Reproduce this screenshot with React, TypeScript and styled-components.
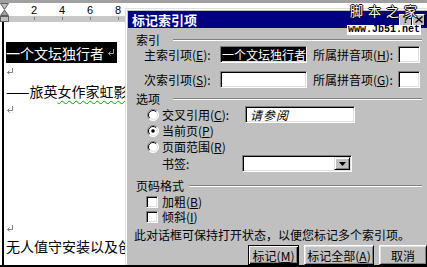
import styled, { createGlobalStyle } from "styled-components";

const cjk = `"Noto Sans CJK SC", "Noto Sans", sans-serif`;

const GlobalStyle = createGlobalStyle`
  html, body { margin: 0; padding: 0; background: #fff; }
  body { font-family: ${cjk}; }
  * { box-sizing: border-box; }
`;

function ReturnMark({ color = "#808080" }: { color?: string }) {
  return (
    <svg width="8" height="7" viewBox="0 0 8 7">
      <path d="M6.5 0 V4.5 H1.5" stroke={color} fill="none" />
      <path d="M3.5 2.5 L1.5 4.5 L3.5 6.5" stroke={color} fill="none" />
    </svg>
  );
}

function RadioIcon({ checked }: { checked?: boolean }) {
  return (
    <svg width="12" height="12" viewBox="0 0 12 12">
      <circle cx="6" cy="6" r="5.5" fill="#fff" />
      <path d="M2.1 9.9 A5.5 5.5 0 0 1 9.9 2.1" stroke="#808080" fill="none" />
      <path d="M2.8 9.2 A4.5 4.5 0 0 1 9.2 2.8" stroke="#000" fill="none" />
      <path d="M9.9 2.1 A5.5 5.5 0 0 1 2.1 9.9" stroke="#fff" fill="none" />
      <path d="M9.2 2.8 A4.5 4.5 0 0 1 2.8 9.2" stroke="#dfdfdf" fill="none" />
      {checked && <circle cx="6" cy="6" r="1.8" fill="#000" />}
    </svg>
  );
}

function IndentMarker() {
  return (
    <svg width="9" height="19" viewBox="0 0 9 19">
      <polygon points="0.5,0.5 8.5,0.5 4.5,6.5" fill="#c0c0c0" stroke="#606060" />
      <polygon points="4.5,7 0.5,12.5 8.5,12.5" fill="#a0a0a0" stroke="#606060" />
      <rect x="0.5" y="13.5" width="8" height="5" fill="#c0c0c0" stroke="#606060" />
    </svg>
  );
}

const ticks = [2, 4, 6, 8];

function App() {
  return (
    <Screen>
      <GlobalStyle />
      <Document>
        <Ruler>
          <RulerTop />
          <RulerNumbers>
            {ticks.map((n) => (
              <RulerCell key={n}>{n}</RulerCell>
            ))}
          </RulerNumbers>
          <RulerTicks>
            {ticks.map((n) => (
              <RulerCell key={n}>
                <Tick />
              </RulerCell>
            ))}
          </RulerTicks>
          <MarkerSlot>
            <IndentMarker />
          </MarkerSlot>
        </Ruler>
        <Page>
          <Line $h={21}>
            <Selected>
              一个文坛独行者
              <ReturnMark color="#a0a0a0" />
            </Selected>
          </Line>
          <Line $h={17}>
            <ReturnMark />
          </Line>
          <Line $h={21}>
            ——旅英<Wavy>女作家虹影</Wavy>
          </Line>
          <Line $h={17}>
            <ReturnMark />
          </Line>
          <Line $h={102} />
          <Line $h={16}>
            <ReturnMark />
          </Line>
          <Line $h={19}>无人值守安装以及创建</Line>
        </Page>
      </Document>

      <Dialog>
        <TitleBar>
          标记索引项
          <TitleButtons>
            <TitleButton>?</TitleButton>
            <TitleButton>
              <svg width="8" height="7" viewBox="0 0 8 7">
                <path d="M0.5 0.5 L7.5 6.5 M7.5 0.5 L0.5 6.5" stroke="#000" strokeWidth="1.4" />
              </svg>
            </TitleButton>
          </TitleButtons>
        </TitleBar>
        <Body>
          <GroupTitle $gap={13}>
            索引
            <GroupLine />
          </GroupTitle>
          <FieldRow $indent={8} $top={0}>
            <Label $w={76}>
              主索引项(<u>E</u>):
            </Label>
            <TextBox $w={87}>
              <Highlight>一个文坛独行者</Highlight>
            </TextBox>
            <Label $w={85} $left={6}>
              所属拼音项(<u>H</u>):
            </Label>
            <TextBox $w={22} />
          </FieldRow>
          <FieldRow $indent={8} $top={8}>
            <Label $w={76}>
              次索引项(<u>S</u>):
            </Label>
            <TextBox $w={87} />
            <Label $w={85} $left={6}>
              所属拼音项(<u>G</u>):
            </Label>
            <TextBox $w={22} />
          </FieldRow>

          <GroupTitle $gap={13} $top={3}>
            选项
            <GroupLine />
          </GroupTitle>
          <FieldRow $indent={11} $top={1}>
            <RadioIcon />
            <Label $w={83} $left={3}>
              交叉引用(<u>C</u>):
            </Label>
            <TextBox $w={110}>
              <Hint>请参阅</Hint>
            </TextBox>
          </FieldRow>
          <FieldRow $indent={11} $h={16}>
            <RadioIcon checked />
            <Label $left={3}>
              当前页(<u>P</u>)
            </Label>
          </FieldRow>
          <FieldRow $indent={11} $h={16}>
            <RadioIcon />
            <Label $left={3}>
              页面范围(<u>R</u>)
            </Label>
          </FieldRow>
          <FieldRow $indent={26}>
            <Label $w={80}>书签:</Label>
            <TextBox $w={110}>
              <DropButton>
                <svg width="7" height="4" viewBox="0 0 7 4">
                  <polygon points="0,0 7,0 3.5,4" fill="#000" />
                </svg>
              </DropButton>
            </TextBox>
          </FieldRow>

          <GroupTitle $gap={5} $top={6}>
            页码格式
            <GroupLine />
          </GroupTitle>
          <FieldRow $indent={10} $top={2} $h={15}>
            <CheckBox />
            <Label $left={4}>
              加粗(<u>B</u>)
            </Label>
          </FieldRow>
          <FieldRow $indent={10} $h={16}>
            <CheckBox />
            <Label $left={4}>
              倾斜(<u>I</u>)
            </Label>
          </FieldRow>
          <Note>此对话框可保持打开状态，以便您标记多个索引项。</Note>
          <ButtonRow>
            <Button $w={51} $default>
              标记(<u>M</u>)
            </Button>
            <Button $w={70}>
              标记全部(<u>A</u>)
            </Button>
            <Button $w={48}>取消</Button>
          </ButtonRow>
        </Body>
      </Dialog>

      <Watermark>
        <WatermarkTitle>脚本之家</WatermarkTitle>
        <WatermarkUrl>www.Jb51.net</WatermarkUrl>
      </Watermark>
    </Screen>
  );
}

const Screen = styled.div`
  position: relative;
  width: 427px;
  height: 267px;
  overflow: hidden;
  background: #fff;
  border-bottom: 2px solid #000;
`;

const Document = styled.div`
  display: flex;
  flex-direction: column;
  height: 265px;
`;

const Ruler = styled.div`
  position: relative;
  display: flex;
  flex-direction: column;
  flex: 0 0 22px;
`;

const RulerTop = styled.div`
  height: 3px;
  background: #a0a0a0;
`;

const RulerNumbers = styled.div`
  display: flex;
  height: 13px;
  padding-left: 20px;
  background: #fff;
  font: 11px "Liberation Sans", Arial, sans-serif;
  line-height: 14px;
  color: #000;
`;

const RulerTicks = styled.div`
  display: flex;
  height: 6px;
  padding-left: 20px;
  background: #c8c8c8;
`;

const RulerCell = styled.div`
  width: 28px;
  display: flex;
  justify-content: center;
`;

const Tick = styled.div`
  width: 1px;
  height: 3px;
  margin-top: 1px;
  background: #808080;
`;

const MarkerSlot = styled.div`
  position: absolute;
  left: 0;
  top: 3px;
  line-height: 0;
`;

const Page = styled.div`
  flex: 1;
  display: flex;
  flex-direction: column;
  margin-left: 2px;
  border-left: 2px solid #000;
  padding: 20px 0 0 2px;
  font: 14px ${cjk};
  color: #000;
  white-space: nowrap;
`;

const Line = styled.div<{ $h: number }>`
  height: ${(p) => p.$h}px;
  display: flex;
  align-items: center;
`;

const Selected = styled.span`
  display: flex;
  align-items: center;
  gap: 3px;
  height: 21px;
  width: 111px;
  padding-left: 0;
  background: #000;
  color: #fff;
`;

const Wavy = styled.span`
  text-decoration: underline wavy #00a000;
  text-decoration-thickness: 1px;
  text-underline-offset: 3px;
`;

const Dialog = styled.div`
  position: absolute;
  left: 125px;
  top: 8px;
  width: 306px;
  height: 257px;
  display: flex;
  flex-direction: column;
  padding: 2px 0 0 2px;
  background: #c0c0c0;
  border-top: 1px solid #dfdfdf;
  border-left: 1px solid #dfdfdf;
  box-shadow: inset 1px 1px #fff;
  font: 12px ${cjk};
  color: #000;
  white-space: nowrap;
`;

const TitleBar = styled.div`
  display: flex;
  align-items: center;
  height: 17px;
  padding-left: 4px;
  background: #000080;
  color: #fff;
  font: bold 13px ${cjk};
`;

const TitleButtons = styled.div`
  display: flex;
  margin-left: auto;
  margin-right: 6px;
`;

const TitleButton = styled.div`
  width: 13px;
  height: 12px;
  display: flex;
  align-items: center;
  justify-content: center;
  background: #c0c0c0;
  color: #000;
  font: bold 10px "Liberation Sans", sans-serif;
  border-top: 1px solid #fff;
  border-left: 1px solid #fff;
  border-right: 1px solid #000;
  border-bottom: 1px solid #000;
`;

const Body = styled.div`
  display: flex;
  flex-direction: column;
  padding: 4px 0 0 8px;
`;

const GroupTitle = styled.div<{ $gap: number; $top?: number }>`
  display: flex;
  align-items: center;
  gap: ${(p) => p.$gap}px;
  width: 286px;
  height: 14px;
  margin-top: ${(p) => p.$top ?? 0}px;
`;

const GroupLine = styled.div`
  flex: 1;
  height: 2px;
  margin-top: 1px;
  border-top: 1px solid #808080;
  border-bottom: 1px solid #fff;
`;

const FieldRow = styled.div<{ $indent: number; $top?: number; $h?: number }>`
  display: flex;
  align-items: center;
  height: ${(p) => p.$h ?? 17}px;
  margin-top: ${(p) => p.$top ?? 0}px;
  padding-left: ${(p) => p.$indent}px;
`;

const Label = styled.span<{ $w?: number; $left?: number }>`
  flex: 0 0 ${(p) => (p.$w ? `${p.$w}px` : "auto")};
  margin-left: ${(p) => p.$left ?? 0}px;
  line-height: 14px;
  u {
    text-underline-offset: 1px;
  }
`;

const TextBox = styled.div<{ $w: number }>`
  position: relative;
  display: flex;
  align-items: center;
  width: ${(p) => p.$w}px;
  height: 17px;
  padding-left: 2px;
  overflow: hidden;
  background: #fff;
  border-top: 1px solid #808080;
  border-left: 1px solid #808080;
  border-right: 1px solid #fff;
  border-bottom: 1px solid #fff;
  box-shadow: inset 1px 1px #000, inset -1px -1px #dfdfdf;
`;

const Highlight = styled.span`
  margin-left: -1px;
  padding-right: 2px;
  background: #000;
  color: #fff;
  line-height: 13px;
`;

const Hint = styled.span`
  margin-left: 2px;
  font-style: italic;
  letter-spacing: 1px;
`;

const DropButton = styled.div`
  position: absolute;
  right: 1px;
  top: 1px;
  width: 16px;
  height: 13px;
  display: flex;
  align-items: center;
  justify-content: center;
  background: #c0c0c0;
  border-top: 1px solid #dfdfdf;
  border-left: 1px solid #dfdfdf;
  border-right: 1px solid #000;
  border-bottom: 1px solid #000;
  box-shadow: inset 1px 1px #fff, inset -1px -1px #808080;
`;

const CheckBox = styled.div`
  width: 12px;
  height: 12px;
  background: #fff;
  border-top: 1px solid #808080;
  border-left: 1px solid #808080;
  border-right: 1px solid #fff;
  border-bottom: 1px solid #fff;
  box-shadow: inset 1px 1px #000, inset -1px -1px #dfdfdf;
`;

const Note = styled.div`
  height: 14px;
  margin: 3px 0 0 -2px;
  line-height: 14px;
`;

const ButtonRow = styled.div`
  display: flex;
  gap: 5px;
  margin-top: 3px;
  padding-left: 112px;
`;

const Button = styled.div<{ $w: number; $default?: boolean }>`
  width: ${(p) => p.$w}px;
  height: 20px;
  display: flex;
  align-items: center;
  justify-content: center;
  background: #c0c0c0;
  border-top: 1px solid ${(p) => (p.$default ? "#000" : "#fff")};
  border-left: 1px solid ${(p) => (p.$default ? "#000" : "#fff")};
  border-right: 1px solid #000;
  border-bottom: 1px solid #000;
  box-shadow: ${(p) =>
    p.$default
      ? "inset 1px 1px #fff, inset -1px -1px #000, inset -2px -2px #808080"
      : "inset 1px 1px #dfdfdf, inset -1px -1px #808080"};
  u {
    text-underline-offset: 1px;
  }
`;

const Watermark = styled.div`
  position: absolute;
  left: 347px;
  top: 4px;
  display: flex;
  flex-direction: column;
  align-items: flex-start;
  gap: 7px;
`;

const WatermarkTitle = styled.div`
  margin-left: 3px;
  font: 13px ${cjk};
  line-height: 14px;
  letter-spacing: 5px;
  color: #fff;
  text-shadow: 1px 0 #000, -1px 0 #000, 0 1px #000, 0 -1px #000;
`;

const WatermarkUrl = styled.div`
  padding: 0 1px;
  background: #fff;
  color: #000;
  font: bold 10px "Liberation Mono", "Courier New", monospace;
  line-height: 10px;
`;

export default App;
